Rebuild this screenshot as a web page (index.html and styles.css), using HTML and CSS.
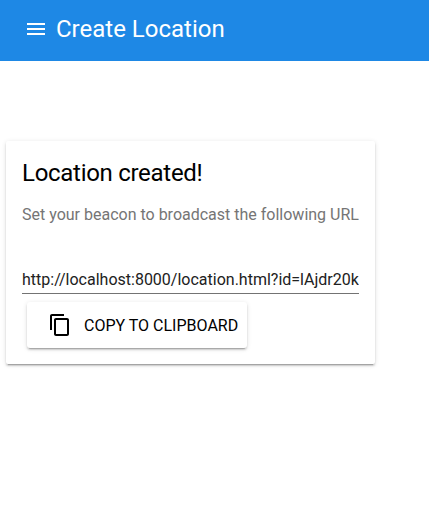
FILE: index.html
```html
<!DOCTYPE html>
<html lang="en">
<head>
<meta charset="utf-8">
<title>Create Location</title>
<link rel="stylesheet" href="styles.css">
</head>
<body>
<header class="toolbar">
  <svg class="menu" viewBox="0 0 24 24"><path d="M3 18h18v-2H3v2zm0-5h18v-2H3v2zm0-7v2h18V6H3z"/></svg>
  <h1 class="title">Create Location</h1>
</header>
<main class="card">
  <h2 class="heading">Location created!</h2>
  <p class="hint">Set your beacon to broadcast the following URL</p>
  <div class="url">http://localhost:8000/location.html?id=lAjdr20k</div>
  <button class="copy">
    <svg class="copy-icon" viewBox="0 0 24 24"><path d="M16 1H4c-1.1 0-2 .9-2 2v14h2V3h12V1zm3 4H8c-1.1 0-2 .9-2 2v14c0 1.1.9 2 2 2h11c1.1 0 2-.9 2-2V7c0-1.1-.9-2-2-2zm0 16H8V7h11v14z"/></svg>
    <span>COPY TO CLIPBOARD</span>
  </button>
</main>
</body>
</html>
```

FILE: styles.css
```css
* { box-sizing: border-box; }
body { margin: 0; min-height: 100vh; background: #fff; font-family: Roboto, sans-serif; font-size: 16px; color: #000; }
.toolbar { display: flex; align-items: center; gap: 8px; height: 61px; padding: 0 24px 3px; background: #1e88e5; color: #fff; }
.menu { width: 24px; height: 24px; fill: currentColor; }
.title { margin: 0; font-size: 24px; font-weight: 400; line-height: 32px; }
.card { width: 369px; height: 223px; margin: 80px 0 0 6px; padding: 16px; border-radius: 2px; background: #fff; box-shadow: 0 2px 2px 0 rgba(0,0,0,.14), 0 1px 5px 0 rgba(0,0,0,.12), 0 3px 1px -2px rgba(0,0,0,.2); }
.heading { margin: 0; font-size: 24px; font-weight: 400; line-height: 32px; letter-spacing: -.012em; }
.hint { margin: 14px 0 0; line-height: 24px; color: #757575; white-space: nowrap; }
.url { margin-top: 41px; height: 26px; line-height: 24px; color: #212121; border-bottom: 1px solid #737373; overflow: hidden; white-space: nowrap; }
.copy { display: flex; align-items: center; width: 220px; height: 46px; margin: 8px 0 0 5px; padding: 0 0 0 21px; gap: 12px; border: 0; border-radius: 3px; background: #fff; color: #000; font: inherit; white-space: nowrap; box-shadow: 0 2px 2px 0 rgba(0,0,0,.14), 0 1px 5px 0 rgba(0,0,0,.12), 0 3px 1px -2px rgba(0,0,0,.2); }
.copy-icon { width: 24px; height: 24px; fill: currentColor; }
```
